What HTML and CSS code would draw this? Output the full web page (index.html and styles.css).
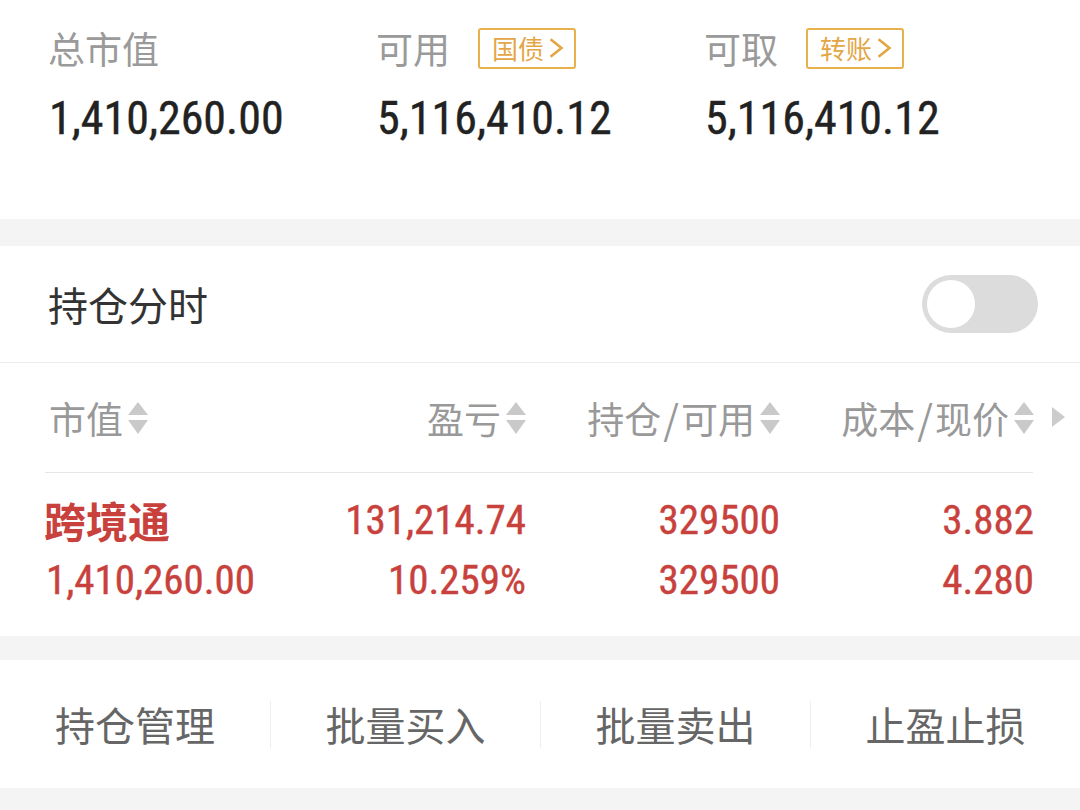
FILE: index.html
```html
<!DOCTYPE html>
<html lang="zh-CN">
<head>
<meta charset="utf-8">
<title>持仓</title>
<link rel="stylesheet" href="styles.css">
</head>
<body>
<div class="page">
  <section class="summary">
    <div class="sum-col">
      <div class="sum-label"><span class="lbl">总市值</span></div>
      <div class="sum-value">1,410,260.00</div>
    </div>
    <div class="sum-col">
      <div class="sum-label"><span class="lbl">可用</span><span class="badge">国债<svg class="chev" viewBox="0 0 16 22"><polyline points="3,3 13,11 3,19"/></svg></span></div>
      <div class="sum-value">5,116,410.12</div>
    </div>
    <div class="sum-col">
      <div class="sum-label"><span class="lbl">可取</span><span class="badge">转账<svg class="chev" viewBox="0 0 16 22"><polyline points="3,3 13,11 3,19"/></svg></span></div>
      <div class="sum-value">5,116,410.12</div>
    </div>
  </section>

  <div class="gap"></div>

  <section class="holdings">
    <div class="switch-row">
      <span class="switch-title">持仓分时</span>
      <span class="toggle"><span class="knob"></span></span>
    </div>
    <div class="thead">
      <div class="th th-left">市值<span class="sort"><i class="up"></i><i class="down"></i></span></div>
      <div class="th">盈亏<span class="sort"><i class="up"></i><i class="down"></i></span></div>
      <div class="th">持仓<span class="slash">/</span>可用<span class="sort"><i class="up"></i><i class="down"></i></span></div>
      <div class="th">成本<span class="slash">/</span>现价<span class="sort"><i class="up"></i><i class="down"></i></span></div>
      <div class="th-more"><i class="play"></i></div>
    </div>
    <div class="trow">
      <div class="td td-left">
        <div class="stock-name">跨境通</div>
        <div class="num">1,410,260.00</div>
      </div>
      <div class="td">
        <div class="num">131,214.74</div>
        <div class="num">10.259%</div>
      </div>
      <div class="td">
        <div class="num">329500</div>
        <div class="num">329500</div>
      </div>
      <div class="td">
        <div class="num">3.882</div>
        <div class="num">4.280</div>
      </div>
      <div></div>
    </div>
  </section>

  <div class="gap gap-b"></div>

  <section class="actions">
    <div class="action">持仓管理</div>
    <div class="action">批量买入</div>
    <div class="action">批量卖出</div>
    <div class="action">止盈止损</div>
  </section>

  <div class="gap gap-end"></div>
</div>
</body>
</html>
```

FILE: styles.css
```css
html, body {
  margin: 0;
  padding: 0;
  background: #ffffff;
}

body {
  font-family: "Noto Sans CJK SC", "Noto Sans", sans-serif;
  width: 1080px;
  height: 810px;
  overflow: hidden;
}

.page {
  display: flex;
  flex-direction: column;
}

/* ---------- summary ---------- */
.summary {
  display: grid;
  grid-template-columns: 328px 328px 1fr;
  padding: 24px 0 0 48px;
  height: 219px;
  box-sizing: border-box;
  background: #fff;
}

.sum-label {
  display: flex;
  align-items: center;
  height: 48px;
}

.lbl {
  font-size: 37px;
  line-height: 48px;
  color: #9a9a9a;
}

.badge {
  display: inline-flex;
  align-items: center;
  margin-left: 28px;
  height: 41px;
  box-sizing: border-box;
  padding: 0 9px 0 12px;
  border: 2px solid #e9b14c;
  border-radius: 3px;
  font-size: 26px;
  color: #e3a646;
  line-height: 1;
}

.chev {
  width: 18px;
  height: 24px;
  margin-left: 3px;
}

.chev polyline {
  fill: none;
  stroke: #e3a646;
  stroke-width: 2.4;
  stroke-linejoin: miter;
}

.sum-value {
  margin-top: 20px;
  font-family: "Liberation Sans Narrow", "Roboto Condensed", "Liberation Sans", sans-serif;
  font-size: 46px;
  line-height: 52px;
  color: #222;
  padding-left: 1px;
  -webkit-text-stroke: 0.4px #222;
}

/* ---------- grey gaps ---------- */
.gap {
  height: 27px;
  background: #f4f4f4;
}

.gap-b {
  height: 24px;
}

.gap-end {
  height: 22px;
}

/* ---------- holdings ---------- */
.holdings {
  background: #fff;
}

.switch-row {
  display: flex;
  align-items: center;
  justify-content: space-between;
  height: 116px;
  padding: 0 42px 0 48px;
  border-bottom: 1px solid #ececec;
}

.switch-title {
  font-size: 40px;
  color: #333;
}

.toggle {
  display: flex;
  align-items: center;
  width: 116px;
  height: 58px;
  border-radius: 29px;
  background: #dcdcdc;
  padding: 0 5px;
  box-sizing: border-box;
}

.knob {
  width: 48px;
  height: 48px;
  border-radius: 50%;
  background: #fff;
}

.thead,
.trow {
  display: grid;
  grid-template-columns: 226px 254px 254px 254px 1fr;
  padding-left: 46px;
}

.thead {
  height: 110px;
  align-items: center;
  position: relative;
}

.thead::after {
  content: "";
  position: absolute;
  left: 45px;
  right: 47px;
  bottom: 0;
  height: 1px;
  background: #e6e6e6;
}

.th {
  display: flex;
  align-items: center;
  justify-content: flex-end;
  font-size: 37px;
  color: #999;
  line-height: 48px;
}

.slash {
  margin: 0 2px;
  font-size: 40px;
}

.th-left {
  justify-content: flex-start;
  padding-left: 3px;
}

.sort {
  display: inline-flex;
  flex-direction: column;
  align-items: center;
  margin-left: 5px;
  width: 20px;
}

.sort i {
  display: block;
  width: 0;
  height: 0;
  border-left: 10px solid transparent;
  border-right: 10px solid transparent;
}

.sort .up {
  border-bottom: 13px solid #c9c9c9;
}

.sort .down {
  margin-top: 5px;
  border-top: 14px solid #c9c9c9;
}

.th-more {
  display: flex;
  align-items: center;
  padding-left: 18px;
  padding-bottom: 2px;
}

.play {
  display: block;
  width: 0;
  height: 0;
  border-top: 10px solid transparent;
  border-bottom: 10px solid transparent;
  border-left: 13px solid #cccccc;
}

.trow {
  height: 163px;
  box-sizing: border-box;
  padding-top: 17px;
}

.td {
  display: flex;
  flex-direction: column;
  align-items: flex-end;
  color: #c8413c;
}

.td-left {
  align-items: flex-start;
}

.stock-name {
  font-size: 42px;
  font-weight: 700;
  line-height: 60px;
  color: #c8413c;
  margin-left: -2px;
}

.num {
  font-family: "Liberation Sans Narrow", "Roboto Condensed", "Liberation Sans", sans-serif;
  font-size: 41px;
  line-height: 60px;
  color: #c8413c;
  -webkit-text-stroke: 0.4px #c8413c;
}

/* ---------- actions ---------- */
.actions {
  display: grid;
  grid-template-columns: repeat(4, 1fr);
  align-items: center;
  height: 128px;
  background: #fff;
}

.action {
  text-align: center;
  font-size: 40px;
  line-height: 47px;
  color: #666;
  border-left: 1px solid #eeeeee;
}

.action:first-child {
  border-left: none;
}
```
